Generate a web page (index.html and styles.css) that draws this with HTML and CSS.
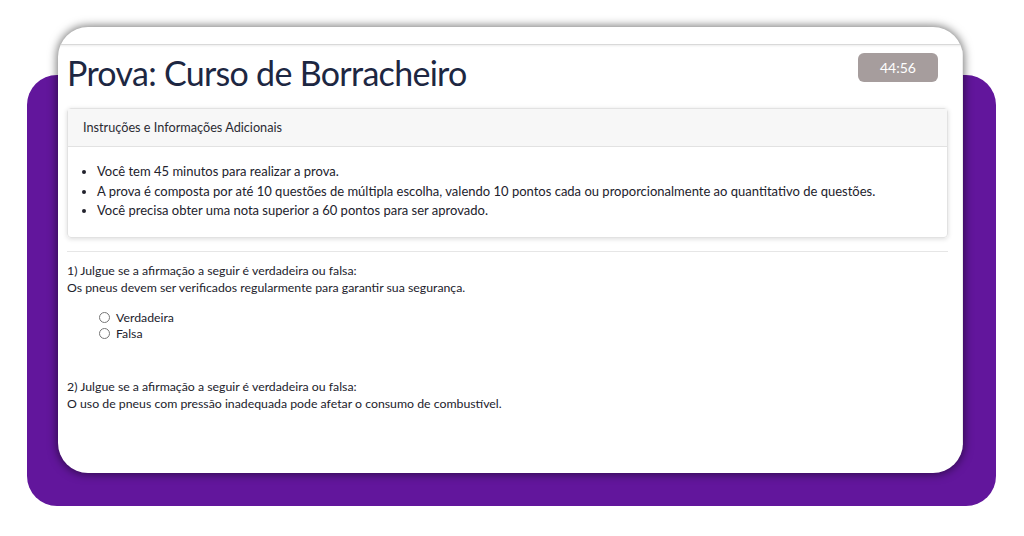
FILE: index.html
```html
<!DOCTYPE html>
<html lang="pt-BR">
<head>
<meta charset="utf-8">
<title>Prova: Curso de Borracheiro</title>
<link rel="stylesheet" href="styles.css">
</head>
<body>
<div class="stage">
  <div class="backdrop"></div>
  <div class="window">
    <div class="topbar"></div>
    <main class="page">
      <header class="exam-head">
        <h1 class="exam-title">Prova: Curso de Borracheiro</h1>
        <div class="timer">44:56</div>
      </header>

      <section class="info-card">
        <div class="info-header">Instruções e Informações Adicionais</div>
        <div class="info-body">
          <ul class="info-list">
            <li>Você tem 45 minutos para realizar a prova.</li>
            <li>A prova é composta por até 10 questões de múltipla escolha, valendo 10 pontos cada ou proporcionalmente ao quantitativo de questões.</li>
            <li>Você precisa obter uma nota superior a 60 pontos para ser aprovado.</li>
          </ul>
        </div>
      </section>

      <hr class="divider">

      <div class="question">
        <p class="q-text">1) Julgue se a afirmação a seguir é verdadeira ou falsa:<br>Os pneus devem ser verificados regularmente para garantir sua segurança.</p>
        <div class="options">
          <label class="option"><input type="radio" name="q1"> Verdadeira</label>
          <label class="option"><input type="radio" name="q1"> Falsa</label>
        </div>
      </div>

      <div class="question">
        <p class="q-text">2) Julgue se a afirmação a seguir é verdadeira ou falsa:<br>O uso de pneus com pressão inadequada pode afetar o consumo de combustível.</p>
      </div>
    </main>
  </div>
</div>
</body>
</html>
```
FILE: styles.css
```css
html, body {
  margin: 0;
  padding: 0;
  background: #ffffff;
}

body {
  width: 1024px;
  height: 536px;
  overflow: hidden;
  font-family: "Lato", "Noto Sans", sans-serif;
  color: #22222c;
}

.stage {
  position: relative;
  padding: 27px 61px 0 58px;
}

/* purple panel sitting behind the exam window */
.backdrop {
  position: absolute;
  left: 27px;
  top: 75px;
  width: 969px;
  height: 431px;
  border-radius: 30px;
  background: #62169c;
  z-index: 0;
}

.window {
  position: relative;
  z-index: 1;
  height: 446px;
  background: #ffffff;
  border-radius: 30px;
  overflow: hidden;
  box-shadow: 0 0 10px 1px rgba(0, 0, 0, 0.55);
}

.topbar {
  height: 17px;
  border-bottom: 1px solid #d9d9d9;
  box-shadow: 0 1px 2px rgba(0, 0, 0, 0.08);
}

.page {
  padding: 0 14px 0 9px;
  border-right: 1px solid #ececec;
  height: 400px;
}

.exam-head {
  display: flex;
  justify-content: space-between;
  align-items: flex-start;
  padding-top: 8px;
}

.exam-title {
  margin: 0;
  font-size: 34px;
  line-height: 40px;
  font-weight: 400;
  color: #1d2742;
  letter-spacing: -0.7px;
}

.timer {
  width: 80px;
  height: 29px;
  margin-right: 10px;
  border-radius: 6px;
  background: #a69d9d;
  color: #ffffff;
  font-size: 14px;
  line-height: 29px;
  text-align: center;
}

.info-card {
  margin-top: 15px;
  border: 1px solid #e2e2e2;
  border-radius: 4px;
  box-shadow: 0 1px 5px rgba(0, 0, 0, 0.14);
  font-size: 13px;
}

.info-header {
  height: 37px;
  line-height: 37px;
  padding: 0 15px;
  background: #f7f7f7;
  border-bottom: 1px solid #e2e2e2;
  color: #2b2b33;
  font-size: 12.7px;
}

.info-body {
  padding: 15px 16px 16px 16px;
}

.info-list {
  margin: 0;
  padding-left: 13px;
  line-height: 19.5px;
}

.divider {
  margin: 13px 0 0;
  border: 0;
  border-top: 1px solid #e6e6e6;
}

.question {
  font-size: 12.3px;
  line-height: 17px;
}

.q-text {
  margin: 10px 0 0;
}

.options {
  display: flex;
  flex-direction: column;
  margin: 14px 0 0 32px;
  line-height: 16px;
}

.option {
  display: flex;
  align-items: center;
}

.option input {
  width: 11px;
  height: 11px;
  margin: 0 6px 0 0;
}

.question + .question .q-text {
  margin-top: 36px;
}
```
